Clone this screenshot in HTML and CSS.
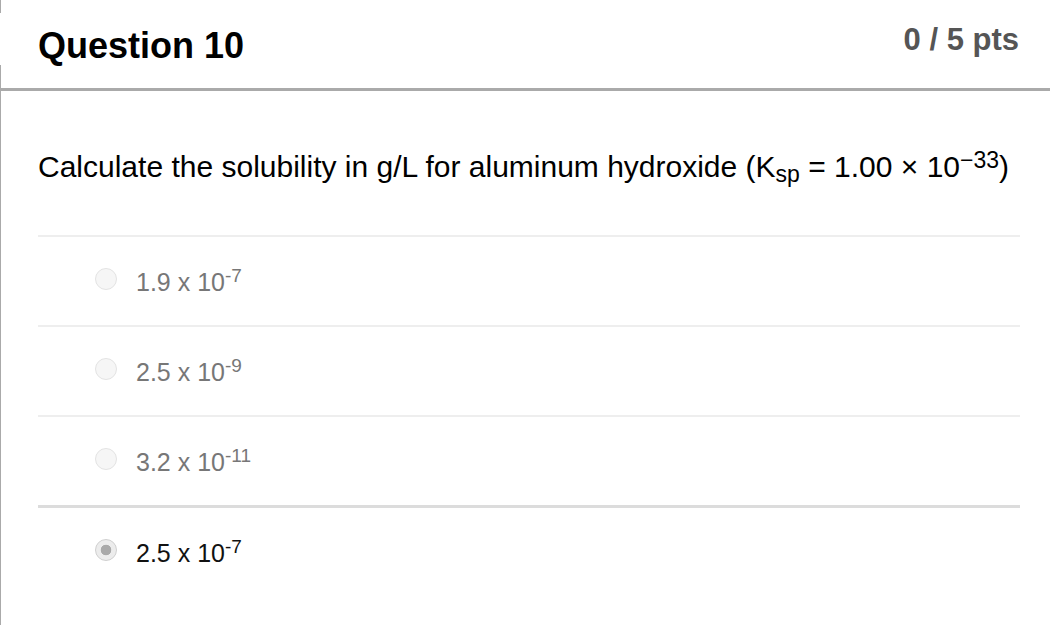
FILE: index.html
```html
<!DOCTYPE html>
<html lang="en">
<head>
<meta charset="utf-8">
<title>Question 10</title>
<link rel="stylesheet" href="styles.css">
</head>
<body>
<div class="page">
  <header class="q-header">
    <h2 class="q-title">Question 10</h2>
    <div class="q-points">0 / 5 pts</div>
  </header>
  <main class="q-body">
    <p class="q-text">Calculate the solubility in g/L for aluminum hydroxide (K<sub>sp</sub> = 1.00 × 10<sup>−33</sup>)</p>
    <div class="answers">
      <div class="answer">
        <span class="radio"></span>
        <span class="answer-text">1.9 x 10<sup>-7</sup></span>
      </div>
      <div class="answer">
        <span class="radio"></span>
        <span class="answer-text">2.5 x 10<sup>-9</sup></span>
      </div>
      <div class="answer">
        <span class="radio"></span>
        <span class="answer-text">3.2 x 10<sup>-11</sup></span>
      </div>
      <div class="answer answer-selected">
        <span class="radio radio-checked"></span>
        <span class="answer-text">2.5 x 10<sup>-7</sup></span>
      </div>
    </div>
  </main>
</div>
</body>
</html>
```
FILE: styles.css
```css
html, body {
  margin: 0;
  padding: 0;
  background: #fff;
}

body {
  font-family: "Liberation Sans", Arial, sans-serif;
  color: #000;
  height: 625px;
  overflow: hidden;
}

.page {
  min-height: 625px;
  background: linear-gradient(to bottom, #aaa 0, #aaa 13px, transparent 13px, transparent 65px, #aaa 65px) no-repeat left top / 1px 100%;
}

.q-header {
  display: flex;
  justify-content: space-between;
  align-items: flex-start;
  box-sizing: border-box;
  height: 91px;
  padding: 0 31px 0 38px;
  border-bottom: 3px solid #aaa;
}

.q-title {
  margin: 28px 0 0 0;
  font-size: 36px;
  line-height: 36px;
  font-weight: bold;
  color: #000;
}

.q-points {
  margin-top: 24px;
  font-size: 31px;
  line-height: 31px;
  font-weight: bold;
  color: #555;
}

.q-body {
  padding: 59px 30px 0 38px;
}

.q-text {
  margin: 0 0 51px 0;
  font-size: 30px;
  line-height: 34px;
}

.q-text sub,
.q-text sup {
  font-size: 23px;
  line-height: 0;
}

.q-text sup {
  vertical-align: 9px;
}

.q-text sub {
  vertical-align: -5px;
}

.answers {
  display: flex;
  flex-direction: column;
}

.answer {
  display: flex;
  align-items: flex-start;
  gap: 19px;
  height: 88px;
  padding-left: 57px;
  border-top: 2px solid #eee;
}

.answer-selected {
  border-top: 3px solid #dcdcdc;
  height: 87px;
}

.radio {
  flex: none;
  box-sizing: border-box;
  width: 22px;
  height: 22px;
  margin-top: 31px;
  border-radius: 50%;
  border: 1px solid #e3e3e3;
  background: #f6f6f6;
}

.radio-checked {
  border: 1px solid #cfcfcf;
  background: radial-gradient(circle, #a9a9a9 0, #a9a9a9 5px, #ececec 5.6px);
}

.answer-text {
  margin-top: 31px;
  font-size: 25px;
  line-height: 29px;
  color: #777;
}

.answer-selected .answer-text {
  color: #111;
}

.answer-text sup {
  font-size: 19px;
  line-height: 0;
  vertical-align: 9px;
}
```
